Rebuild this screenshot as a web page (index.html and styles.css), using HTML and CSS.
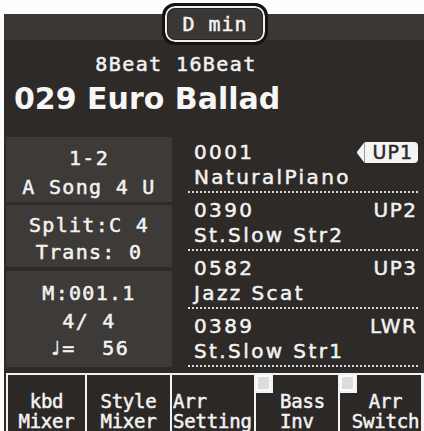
FILE: index.html
```html
<!DOCTYPE html>
<html>
<head>
<meta charset="utf-8">
<link rel="stylesheet" href="styles.css">
</head>
<body>
<div class="screen">
  <div class="topbar"></div>
  <div class="chord">D min</div>
  <div class="titles">
    <div class="genre">8Beat 16Beat</div>
    <div class="style-name">029 Euro Ballad</div>
  </div>
  <div class="main">
    <div class="info">
      <div class="box box-song"><div>1-2</div><div>A Song 4 U</div></div>
      <div class="box box-split"><div>Split:C 4</div><div>Trans: 0</div></div>
      <div class="box box-meas"><div>M:001.1</div><div>4/ 4</div><div>♩=&nbsp;&nbsp;56</div></div>
    </div>
    <div class="parts">
      <div class="part">
        <div class="part-top"><span>0001</span><span class="tag">UP1</span></div>
        <div class="part-name">NaturalPiano</div>
      </div>
      <div class="part">
        <div class="part-top"><span>0390</span><span class="lbl">UP2</span></div>
        <div class="part-name">St.Slow Str2</div>
      </div>
      <div class="part">
        <div class="part-top"><span>0582</span><span class="lbl">UP3</span></div>
        <div class="part-name">Jazz Scat</div>
      </div>
      <div class="part">
        <div class="part-top"><span>0389</span><span class="lbl">LWR</span></div>
        <div class="part-name">St.Slow Str1</div>
      </div>
    </div>
  </div>
  <div class="buttons">
    <div class="btn btn-center"><div>kbd</div><div>Mixer</div></div>
    <div class="btn btn-center"><div>Style</div><div>Mixer</div></div>
    <div class="btn btn-left"><div>Arr</div><div>Setting</div></div>
    <div class="btn btn-bass"><span class="chk"></span><div>Bass</div><div>Inv</div></div>
    <div class="btn btn-switch"><span class="chk"></span><div>Arr</div><div>Switch</div></div>
  </div>
</div>
</body>
</html>
```

FILE: styles.css
```css
html, body {
  margin: 0;
  padding: 0;
  background: #fdfdfd;
  overflow: hidden;
}
body {
  width: 424px;
  height: 431px;
  font-family: "DejaVu Sans Mono", monospace;
  color: #f2f2f2;
}
.screen {
  position: relative;
  margin: 14px 0 0 4px;
  width: 420px;
  height: 417px;
  background: #2d2a28;
  -webkit-text-stroke: 0.5px currentColor;
}
.topbar {
  height: 26px;
  background: #3a3734;
}
.chord {
  position: absolute;
  left: 158px;
  top: -11px;
  width: 100px;
  height: 36px;
  border: 3px solid #141414;
  border-radius: 13px;
  background: #3a3734;
  box-shadow: inset 0 0 0 2px #efefef, inset 0 0 0 3px #222;
  font-size: 20px;
  line-height: 36px;
  letter-spacing: 1px;
  text-align: center;
  color: #f4f4f4;
}
.titles {
  height: 97px;
  padding-left: 10px;
  box-sizing: border-box;
  padding-top: 12px;
}
.genre {
  width: 324px;
  text-align: center;
  font-size: 20px;
  line-height: 24px;
  letter-spacing: 1.4px;
}
.style-name {
  margin-top: 5px;
  font-family: "DejaVu Sans", sans-serif;
  font-weight: bold;
  font-size: 30px;
  line-height: 36px;
  color: #f6f6f6;
  -webkit-text-stroke: 0;
}
.main {
  display: flex;
  height: 236px;
}
.info {
  margin-left: 2px;
  width: 166px;
  display: flex;
  flex-direction: column;
}
.box {
  background: #3d3a37;
  text-align: center;
  font-size: 20px;
  letter-spacing: 1.3px;
  box-sizing: border-box;
}
.box-song {
  height: 65px;
  padding-top: 7px;
  line-height: 29px;
}
.box-split {
  height: 62px;
  margin-top: 3px;
  padding-top: 7px;
  line-height: 27px;
}
.box-meas {
  height: 96px;
  margin-top: 4px;
  padding-top: 9px;
  line-height: 27.5px;
}
.parts {
  margin-left: 16px;
  width: 230px;
  margin-top: -2px;
  font-family: "DejaVu Sans", sans-serif;
  font-size: 20px;
  letter-spacing: 2.4px;
}
.part {
  height: 58px;
  box-sizing: border-box;
  padding: 5px 2px 0 6px;
  border-bottom: 2px dotted #d8d8d8;
  line-height: 25px;
}
.part-top {
  display: flex;
  justify-content: space-between;
  align-items: center;
}
.lbl {
  letter-spacing: 1.5px;
  margin-right: -1.5px;
}
.tag {
  position: relative;
  height: 21px;
  line-height: 21px;
  padding: 0 5px 0 8px;
  margin-right: -2px;
  background: #f4f4f4;
  color: #2d2a28;
  letter-spacing: 1px;
  border-radius: 0 4px 4px 0;
  font-size: 19px;
}
.tag::before {
  content: "";
  position: absolute;
  left: -8px;
  top: 0;
  width: 8px;
  height: 21px;
  background: #f4f4f4;
  clip-path: polygon(100% 0, 100% 100%, 0 50%);
}
.buttons {
  margin-left: 2px;
  height: 58px;
  box-sizing: border-box;
  background: #f2f2f2;
  padding: 2px 3px 0 2px;
  display: grid;
  grid-template-columns: 77px 83px 82px 82px 81px;
  column-gap: 2px;
}
.btn {
  position: relative;
  background: #2b2826;
  font-size: 19px;
  line-height: 20px;
  letter-spacing: -0.2px;
  padding-top: 16px;
  white-space: nowrap;
  overflow: hidden;
}
.btn-center {
  text-align: center;
}
.btn-left {
  text-align: left;
  padding-left: 1px;
}
.btn-bass {
  text-align: left;
  padding-left: 24px;
}
.btn-switch {
  text-align: center;
  padding-left: 10px;
}
.chk {
  position: absolute;
  left: 0;
  top: 0;
  width: 11px;
  height: 12px;
  background: #dcdcdc;
  border: 2px solid #fafafa;
  box-shadow: 1px 1px 0 1px #f2f2f2;
}
```
